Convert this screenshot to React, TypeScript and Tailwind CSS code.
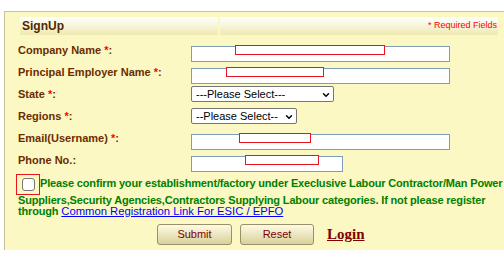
import React from 'react';
import { ChevronDown } from 'lucide-react';

const font = { fontFamily: '"Liberation Sans", Arial, sans-serif' };

type Field = {
  label: string;
  required: boolean;
  kind: 'text' | 'select';
  width: number;
  maskLeft?: number;
  maskWidth?: number;
  placeholder?: string;
};

const fields: Field[] = [
  { label: 'Company Name', required: true, kind: 'text', width: 259, maskLeft: 44, maskWidth: 150 },
  { label: 'Principal Employer Name', required: true, kind: 'text', width: 259, maskLeft: 35, maskWidth: 98 },
  { label: 'State', required: true, kind: 'select', width: 143, placeholder: '---Please Select---' },
  { label: 'Regions', required: true, kind: 'select', width: 106, placeholder: '--Please Select--' },
  { label: 'Email(Username)', required: true, kind: 'text', width: 259, maskLeft: 48, maskWidth: 72 },
  { label: 'Phone No.', required: false, kind: 'text', width: 152, maskLeft: 54, maskWidth: 74 },
];

const Input: React.FC<{ f: Field }> = ({ f }) => {
  if (f.kind === 'select') {
    return (
      <div
        className="relative h-[16px] border border-[#767676] rounded-[2px] bg-white flex items-center"
        style={{ width: f.width }}
      >
        <select
          className="appearance-none w-full h-full bg-transparent pl-[4px] text-[11px] leading-[14px] text-black outline-none"
          style={font}
          defaultValue=""
        >
          <option value="">{f.placeholder}</option>
        </select>
        <ChevronDown
          className="absolute right-[2px] top-[3px] pointer-events-none text-black"
          size={10}
          strokeWidth={3.5}
        />
      </div>
    );
  }
  return (
    <div className="relative h-[16px]" style={{ width: f.width }}>
      <input
        type="text"
        className="w-full h-full border border-[#7f9db9] bg-white outline-none"
      />
      <span
        className="absolute top-[3px] h-[10px] border border-[#e8141e] bg-white"
        style={{ left: f.maskLeft, width: f.maskWidth }}
      />
    </div>
  );
};

const App: React.FC = () => {
  return (
    <div className="w-[504px] h-[253px] bg-white overflow-hidden" style={font}>
      <div className="ml-[4px] mt-[11px] w-[510px] border-t border-l border-[#c8c39a] bg-[#fbf8c3] pt-[5px] pl-[13px] pb-[4px]">
        {/* Header */}
        <div className="ml-[2px] flex gap-[2px] h-[18px]">
          <div className="w-[198px] h-full bg-gradient-to-b from-white to-[#efe9b0] flex items-center pl-[2px]">
            <span className="text-[12px] font-bold text-[#4f2800]">SignUp</span>
          </div>
          <div className="w-[278px] h-full bg-gradient-to-b from-white to-[#efe9b0] flex items-center justify-end pr-[1px]">
            <span className="text-[9px] text-[#ff0000]">* Required Fields</span>
          </div>
        </div>

        {/* Fields */}
        <div className="mt-[4px]">
          {fields.map((f) => (
            <div key={f.label} className="flex items-center h-[22px]">
              <label className="w-[173px] text-[11px] font-bold text-[#6b2c00]">
                {f.label}
                {f.required && <span className="text-[#ff0000]"> *</span>}:
              </label>
              <Input f={f} />
            </div>
          ))}
        </div>

        {/* Confirmation */}
        <p className="mt-[3px] w-[490px] text-[11px] leading-[11px] tracking-[-0.16px] font-bold text-[#008000]">
          <span className="inline-flex items-center justify-center w-[24px] h-[21px] ml-[-2px] border border-[#e8141e] align-middle">
            <span className="w-[13px] h-[13px] rounded-[3px] border border-[#767676] bg-white" />
          </span>
          Please confirm your establishment/factory under Execlusive Labour Contractor/Man Power
          Suppliers,Security Agencies,Contractors Supplying Labour categories. If not please register
          through{' '}
          <a href="#" className="text-[11.25px] tracking-normal font-normal text-[#0000ff] underline">
            Common Registration Link For ESIC / EPFO
          </a>
        </p>

        {/* Actions */}
        <div className="mt-[6px] flex items-center pl-[139px] gap-[8px]">
          <button className="w-[75px] h-[21px] rounded-[3px] border border-[#9a9068] bg-gradient-to-b from-[#fdfbe4] to-[#d9d19c] text-[11px] text-[#800000]">
            Submit
          </button>
          <button className="w-[74px] h-[21px] rounded-[3px] border border-[#9a9068] bg-gradient-to-b from-[#fdfbe4] to-[#d9d19c] text-[11px] text-[#800000]">
            Reset
          </button>
          <a
            href="#"
            className="ml-[5px] text-[15px] font-bold text-[#800000] underline"
            style={{ fontFamily: '"Liberation Serif", "Times New Roman", serif' }}
          >
            Login
          </a>
        </div>
      </div>
    </div>
  );
};

export default App;
